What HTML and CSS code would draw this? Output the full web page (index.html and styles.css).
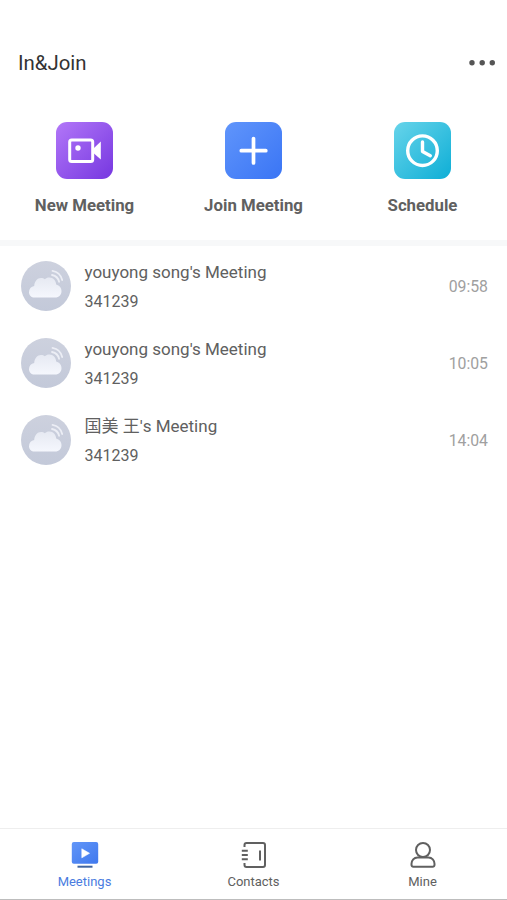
FILE: index.html
```html
<!DOCTYPE html>
<html lang="en">
<head>
  <meta charset="UTF-8">
  <meta name="viewport" content="width=device-width,initial-scale=1.0">
  <title>In&amp;Join</title>
  <link rel="stylesheet" href="styles.css">
</head>
<body>

  <!-- Shared shapes -->
  <svg class="defs" width="0" height="0">
    <defs>
      <linearGradient id="avatar-bg" x1="0" y1="0" x2="0" y2="1">
        <stop offset="0" stop-color="#cdd1de"/>
        <stop offset="1" stop-color="#c3c9d9"/>
      </linearGradient>
      <linearGradient id="cloud-bg" x1="0" y1="0" x2="0" y2="1">
        <stop offset="0" stop-color="#e6e9f2"/>
        <stop offset="1" stop-color="#f5f7fd"/>
      </linearGradient>
      <linearGradient id="screen-bg" x1="0" y1="0" x2="1" y2="1">
        <stop offset="0" stop-color="#6296f8"/>
        <stop offset="1" stop-color="#3f78ee"/>
      </linearGradient>
      <symbol id="avatar" viewBox="0 0 50 50">
        <circle cx="25" cy="25" r="25" fill="url(#avatar-bg)"/>
        <path d="M13.500 36.500C10.300 36.500 8 34.200 8 31.200c0-3.200 2-5.600 5.200-6.200C13.500 20.500 16.300 17 20 17c1.600 0 2.800.4 3.900 1.200 1.300-1.200 2.800-1.700 4.600-1.600 3.800.2 6.300 2.900 6.700 6.900 3.200.8 5.300 3.400 5.300 6.700 0 3.700-2.600 6.300-6.300 6.300z" fill="url(#cloud-bg)"/>
        <path d="M31 14c4 .9 6.400 3.300 7.100 6.800M31.500 9.800c5.300 1 8.600 4.300 9.700 9.200" fill="none" stroke="#eceef5" stroke-width="1.800" stroke-linecap="round"/>
      </symbol>
    </defs>
  </svg>

  <div class="app">
    <header class="header">
      <h1>In&amp;Join</h1>
      <svg class="more" width="26" height="6" viewBox="0 0 26 6" fill="#555">
        <circle cx="3" cy="2.700" r="2.700"/>
        <circle cx="13.200" cy="2.700" r="2.700"/>
        <circle cx="23.300" cy="2.700" r="2.700"/>
      </svg>
    </header>

    <section class="actions">
      <div class="action">
        <div class="tile tile-new">
          <svg width="57" height="57" viewBox="0 0 57 57">
            <rect x="13.700" y="18" width="23" height="21.500" rx="2" fill="none" stroke="#fff" stroke-width="3"/>
            <circle cx="22" cy="26" r="2.700" fill="#fff"/>
            <path d="M38 26l6.800-6.500v18L38 31.500z" fill="#fff"/>
          </svg>
        </div>
        <span>New Meeting</span>
      </div>
      <div class="action">
        <div class="tile tile-join">
          <svg width="57" height="57" viewBox="0 0 57 57">
            <path d="M28.500 16.500v24.500M16.300 28.700h24.500" stroke="#fff" stroke-width="3.700" stroke-linecap="round"/>
          </svg>
        </div>
        <span>Join Meeting</span>
      </div>
      <div class="action">
        <div class="tile tile-schedule">
          <svg width="57" height="57" viewBox="0 0 57 57" fill="none" stroke="#fff" stroke-width="3.400">
            <circle cx="28.500" cy="28.700" r="14.800"/>
            <path d="M28.500 20v9.500l7.800 4.300" stroke-linecap="round" stroke-linejoin="round"/>
          </svg>
        </div>
        <span>Schedule</span>
      </div>
    </section>

    <main class="meetings">
      <div class="meeting">
        <svg class="avatar"><use href="#avatar"/></svg>
        <div class="info">
          <p class="name">youyong song's Meeting</p>
          <p class="code">341239</p>
        </div>
        <span class="time">09:58</span>
      </div>
      <div class="meeting">
        <svg class="avatar"><use href="#avatar"/></svg>
        <div class="info">
          <p class="name">youyong song's Meeting</p>
          <p class="code">341239</p>
        </div>
        <span class="time">10:05</span>
      </div>
      <div class="meeting">
        <svg class="avatar"><use href="#avatar"/></svg>
        <div class="info">
          <p class="name">国美 王's Meeting</p>
          <p class="code">341239</p>
        </div>
        <span class="time">14:04</span>
      </div>
    </main>

    <nav class="tabs">
      <div class="tab active">
        <svg width="28" height="28" viewBox="0 0 28 28">
          <rect x=".8" y="1" width="26.400" height="21.800" rx="2" fill="url(#screen-bg)"/>
          <path d="M10.800 7.800v9l7.700-4.500z" fill="#fff" stroke="#fff" stroke-width=".6" stroke-linejoin="round"/>
          <path d="M6.500 25.700h15" stroke="#41659f" stroke-width="2"/>
        </svg>
        <span>Meetings</span>
      </div>
      <div class="tab">
        <svg width="28" height="28" viewBox="0 0 28 28" fill="none" stroke="#606060" stroke-width="2">
          <path d="M4.500 6V4a2 2 0 0 1 2-2h16.500a2 2 0 0 1 2 2v20a2 2 0 0 1-2 2h-16.500a2 2 0 0 1-2-2v-2"/>
          <path d="M1.800 9.700h6M1.800 14h6M1.800 18.300h6M20 9.500v10"/>
        </svg>
        <span>Contacts</span>
      </div>
      <div class="tab">
        <svg width="28" height="28" viewBox="0 0 28 28" fill="none" stroke="#606060" stroke-width="2">
          <circle cx="14" cy="9" r="7"/>
          <path d="M8.500 16.500h11c3.500 0 6 2.800 6 6.300V24a1.800 1.800 0 0 1-1.800 1.800H4.300A1.800 1.800 0 0 1 2.500 24v-1.200c0-3.500 2.500-6.300 6-6.300z"/>
        </svg>
        <span>Mine</span>
      </div>
    </nav>
  </div>

</body>
</html>
```
FILE: styles.css
```css
* {
  box-sizing: border-box;
}

body {
  margin: 0;
  background-color: #fff;
  color: #606060;
  font-family: Roboto, "Noto Sans CJK SC", sans-serif;
}

svg {
  display: block;
}

.defs {
  position: absolute;
}

.app {
  display: flex;
  flex-direction: column;
  height: 100vh;
  border-bottom: 1px solid #bdbdbd;
}

.header {
  display: flex;
  justify-content: space-between;
  align-items: center;
  height: 50px;
  margin-top: 38px;
  padding: 0 12.5px 0 18px;
}

h1 {
  margin: 0;
  color: #333;
  font-size: 20.4px;
  font-weight: 400;
}

.actions {
  display: grid;
  grid-template-columns: repeat(3, 1fr);
  height: 158px;
  padding-top: 34.4px;
  border-bottom: 6px solid #f7f8f9;
}

.action {
  display: flex;
  flex-direction: column;
  align-items: center;
  gap: 15.6px;
  font-size: 16.8px;
  font-weight: 700;
  line-height: 20px;
}

.tile {
  width: 57px;
  height: 57px;
  border-radius: 11px;
}

.tile-new {
  background: linear-gradient(135deg, #b277f8, #7637e0);
}

.tile-join {
  background: linear-gradient(135deg, #6095fb, #3a75f5);
}

.tile-schedule {
  background: linear-gradient(135deg, #67d4ea, #0eaed6);
}

.meetings {
  flex: 1;
  padding: 1px 19px 0 21px;
}

.meeting {
  display: flex;
  align-items: center;
  height: 77.3px;
}

.avatar {
  width: 50px;
  height: 50px;
}

.info {
  flex: 1;
  padding: 1px 0 0 13.5px;
}

.info p {
  margin: 0;
}

.name {
  font-size: 17px;
  line-height: 30px;
}

.code {
  font-size: 16px;
  line-height: 29px;
}

.time {
  padding-top: 1px;
  color: #a0a0a0;
  font-size: 15.8px;
}

.tabs {
  display: grid;
  grid-template-columns: repeat(3, 1fr);
  height: 71px;
  padding-top: 12px;
  border-top: 1px solid #eee;
}

.tab {
  display: flex;
  flex-direction: column;
  align-items: center;
  gap: 5px;
  font-size: 13px;
  line-height: 16px;
}

.active {
  color: #4a7ce0;
}
```
